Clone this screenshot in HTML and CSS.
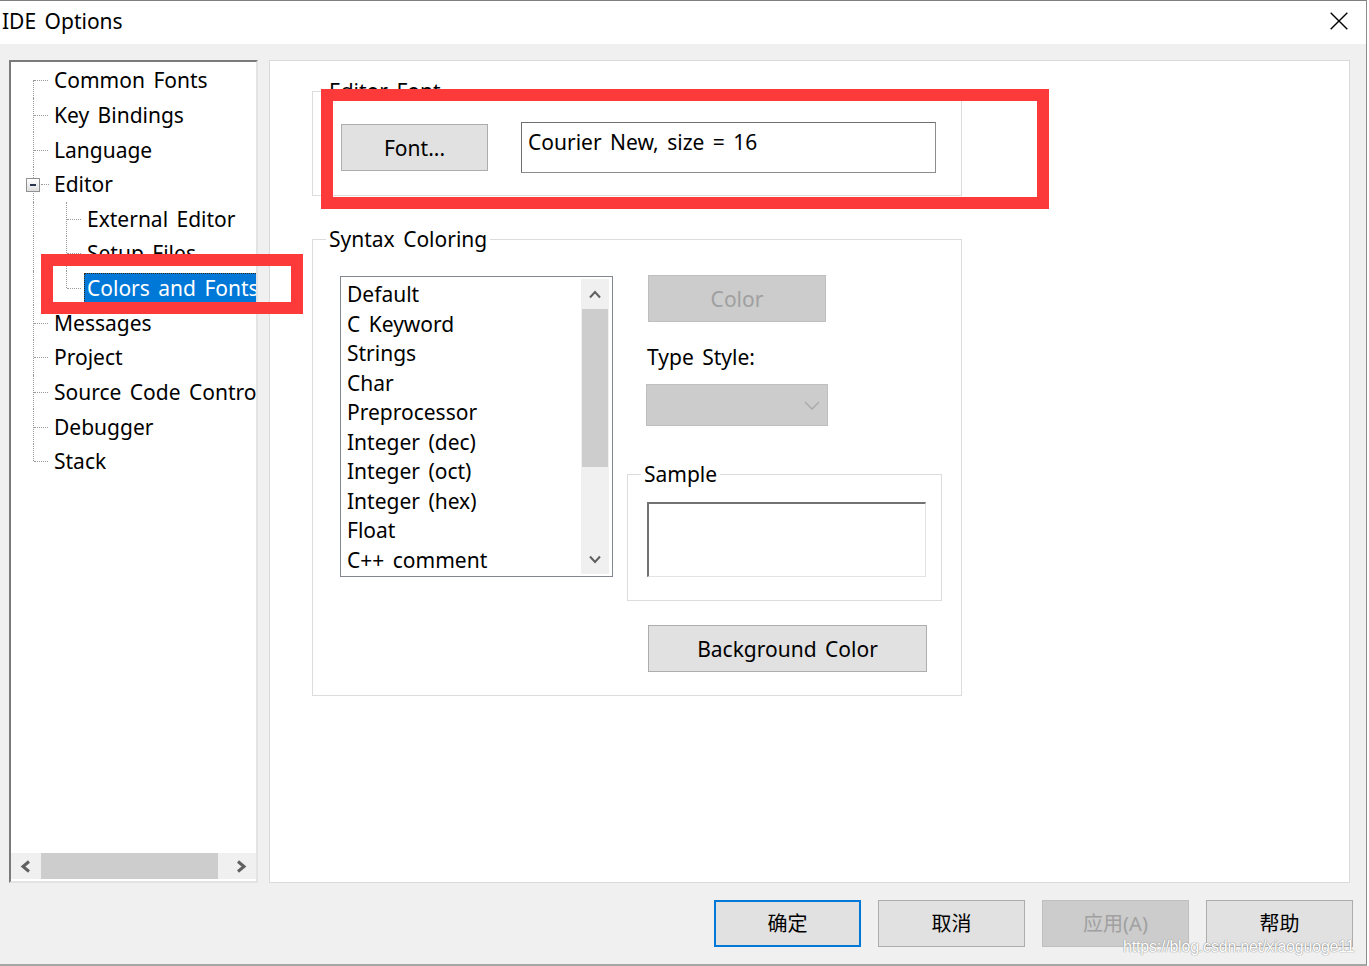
FILE: index.html
```html
<!DOCTYPE html>
<html lang="en">
<head>
<meta charset="utf-8">
<title>IDE Options</title>
<link rel="stylesheet" href="styles.css">
</head>
<body>
<div class="window">
  <header class="titlebar">
    <span class="title">IDE Options</span>
    <svg class="close" width="18" height="18" viewBox="0 0 18 18"><path d="M0.7 0.7 L17.3 17.3 M17.3 0.7 L0.7 17.3" stroke="#000" stroke-width="1.4" fill="none"/></svg>
  </header>

  <main class="content">
    <aside class="tree-panel">
      <div class="tree">
        <div class="node l1 first"><i class="v1"></i><i class="h1"></i><span class="label">Common Fonts</span></div>
        <div class="node l1"><i class="v1"></i><i class="h1"></i><span class="label">Key Bindings</span></div>
        <div class="node l1"><i class="v1"></i><i class="h1"></i><span class="label">Language</span></div>
        <div class="node l1 open"><i class="v1"></i><i class="h1 short"></i><i class="toggle"></i><span class="label">Editor</span></div>
        <div class="node l2"><i class="v1"></i><i class="v2"></i><i class="h2"></i><span class="label">External Editor</span></div>
        <div class="node l2"><i class="v1"></i><i class="v2"></i><i class="h2"></i><span class="label">Setup Files</span></div>
        <div class="node l2 lastchild"><i class="v1"></i><i class="v2"></i><i class="h2"></i><span class="label sel">Colors and Fonts</span></div>
        <div class="node l1"><i class="v1"></i><i class="h1"></i><span class="label">Messages</span></div>
        <div class="node l1"><i class="v1"></i><i class="h1"></i><span class="label">Project</span></div>
        <div class="node l1"><i class="v1"></i><i class="h1"></i><span class="label">Source Code Control</span></div>
        <div class="node l1"><i class="v1"></i><i class="h1"></i><span class="label">Debugger</span></div>
        <div class="node l1 last"><i class="v1"></i><i class="h1"></i><span class="label">Stack</span></div>
      </div>
      <div class="hscroll">
        <span class="sbtn"><svg width="12" height="13" viewBox="0 0 12 13"><path d="M9 1.5 L3 6.5 L9 11.5" stroke="#606060" stroke-width="3" fill="none"/></svg></span>
        <span class="htrack"><span class="hthumb"></span></span>
        <span class="sbtn"><svg width="12" height="13" viewBox="0 0 12 13"><path d="M3 1.5 L9 6.5 L3 11.5" stroke="#606060" stroke-width="3" fill="none"/></svg></span>
      </div>
    </aside>

    <section class="page">
      <div class="group editor-font">
        <span class="legend">Editor Font</span>
        <div class="font-row">
          <button class="btn font-btn" type="button">Font...</button>
          <div class="field">Courier New, size = 16</div>
        </div>
      </div>

      <div class="group syntax">
        <span class="legend">Syntax Coloring</span>
        <div class="syntax-row">
          <div class="listbox">
            <ul class="items">
              <li>Default</li>
              <li>C Keyword</li>
              <li>Strings</li>
              <li>Char</li>
              <li>Preprocessor</li>
              <li>Integer (dec)</li>
              <li>Integer (oct)</li>
              <li>Integer (hex)</li>
              <li>Float</li>
              <li>C++ comment</li>
            </ul>
            <div class="vscroll">
              <span class="vbtn"><svg width="14" height="9" viewBox="0 0 14 9"><path d="M2 7.5 L7 2 L12 7.5" stroke="#606060" stroke-width="2" fill="none"/></svg></span>
              <span class="vtrack"><span class="vthumb"></span></span>
              <span class="vbtn"><svg width="14" height="9" viewBox="0 0 14 9"><path d="M2 1.5 L7 7 L12 1.5" stroke="#606060" stroke-width="2" fill="none"/></svg></span>
            </div>
          </div>

          <div class="side">
            <button class="btn disabled color-btn" type="button">Color</button>
            <span class="type-label">Type Style:</span>
            <div class="combo"><svg width="16" height="9" viewBox="0 0 16 9"><path d="M1 1 L8 8 L15 1" stroke="#a9a9a9" stroke-width="1.3" fill="none"/></svg></div>
            <div class="group sample">
              <span class="legend">Sample</span>
              <div class="sample-box"></div>
            </div>
            <button class="btn bg-btn" type="button">Background Color</button>
          </div>
        </div>
      </div>
    </section>
  </main>

  <footer class="buttons">
    <button class="btn dlg default" type="button">确定</button>
    <button class="btn dlg" type="button">取消</button>
    <button class="btn dlg disabled" type="button">应用(A)</button>
    <button class="btn dlg" type="button">帮助</button>
  </footer>

  <div class="mark mark-tree"></div>
  <div class="mark mark-font"></div>
  <div class="watermark">https://blog.csdn.net/xiaoguoge11</div>
</div>
</body>
</html>
```

FILE: styles.css
```css
* { box-sizing: border-box; }

html, body {
  margin: 0;
  padding: 0;
  background: #ffffff;
}

body {
  font-family: "Noto Sans", "Noto Sans CJK SC", sans-serif;
  font-size: 21px;
  word-spacing: 3px;
  color: #000;
}

.window {
  position: relative;
  width: 1367px;
  height: 966px;
  background: #f0f0f0;
  border-top: 1px solid #7f7f7f;
  border-right: 1px solid #8c8c8c;
  border-bottom: 2px solid #a6a6a6;
  overflow: hidden;
}

/* ---------- title bar ---------- */
.titlebar {
  height: 43px;
  background: #fff;
  display: flex;
  align-items: center;
  justify-content: space-between;
  padding: 0 18px 3px 2px;
}

.title {
  font-size: 21px;
  line-height: 24px;
}

.close { display: block; }

/* ---------- main area ---------- */
.content {
  display: flex;
  gap: 11px;
  padding: 16px 16px 0 9px;
  height: 839px;
}

/* tree panel */
.tree-panel {
  width: 249px;
  height: 823px;
  background: #fff;
  border-top: 2px solid #7a7a7a;
  border-left: 2px solid #7a7a7a;
  border-right: 2px solid #e3e3e3;
  border-bottom: 2px solid #e3e3e3;
  display: flex;
  flex-direction: column;
  overflow: hidden;
}

.tree {
  flex: 1;
  padding-top: 1px;
  overflow: hidden;
}

.node {
  position: relative;
  height: 34.64px;
  display: flex;
  align-items: center;
  padding-left: 43px;
  white-space: nowrap;
}

.node.l2 { padding-left: 76px; }

.label { line-height: 28px; }

.v1, .v2, .h1, .h2 {
  position: absolute;
  display: block;
}

.v1 {
  left: 22px;
  top: 0;
  bottom: 0;
  border-left: 1px dotted #9a9a9a;
}
.first .v1 { top: 50%; }
.last .v1 { bottom: 50%; }

.h1 {
  left: 23px;
  width: 14px;
  top: 50%;
  border-top: 1px dotted #9a9a9a;
}
.h1.short { left: 30px; width: 8px; }

.v2 {
  left: 55px;
  top: 0;
  bottom: 0;
  border-left: 1px dotted #9a9a9a;
}
.lastchild .v2 { bottom: 50%; }

.h2 {
  left: 56px;
  width: 14px;
  top: 50%;
  border-top: 1px dotted #9a9a9a;
}

.toggle {
  position: absolute;
  left: 15px;
  top: 50%;
  margin-top: -6px;
  width: 14px;
  height: 14px;
  border: 1px solid #919191;
  background: linear-gradient(#ffffff, #dedede);
}
.toggle::after {
  content: "";
  position: absolute;
  left: 3px;
  right: 3px;
  top: 5px;
  height: 2px;
  background: #2a3550;
}

.label.sel {
  background: #0078d7;
  color: #fff;
  margin-left: -3px;
  padding: 0 2px;
  border: 1px dotted #3a2a10;
  line-height: 28px;
}

/* horizontal scrollbar */
.hscroll {
  height: 26px;
  margin-bottom: 2px;
  background: #f0f0f0;
  display: flex;
}
.sbtn {
  width: 30px;
  display: flex;
  align-items: center;
  justify-content: center;
}
.htrack {
  flex: 1;
  display: flex;
}
.hthumb {
  width: 177px;
  background: #cdcdcd;
}

/* right page */
.page {
  flex: 1;
  height: 823px;
  background: #fff;
  border: 1px solid #dadada;
  padding: 30px 0 0 42px;
}

.group {
  border: 1px solid #dcdcdc;
  width: 650px;
}

.legend {
  display: block;
  width: max-content;
  margin: -13px 0 0 13px;
  padding: 0 3px;
  background: #fff;
  line-height: 24px;
}

.editor-font { height: 105px; }

.font-row {
  margin-top: 19px;
  padding-left: 28px;
  display: flex;
  align-items: center;
}

.btn {
  font-family: "Noto Sans", "Noto Sans CJK SC", sans-serif;
  font-size: 21px;
  word-spacing: 3px;
  color: #000;
  background: #e1e1e1;
  border: 1px solid #adadad;
  padding: 0;
  margin: 0;
  line-height: 24px;
}
.btn.disabled {
  background: #cccccc;
  border-color: #bfbfbf;
  color: #a0a0a0;
}

.font-btn { width: 147px; height: 47px; }

.field {
  margin-left: 33px;
  width: 415px;
  height: 51px;
  border: 1px solid #8c8c8c;
  border-top-color: #6f6f6f;
  border-left-color: #6f6f6f;
  padding: 7px 6px;
  line-height: 24px;
  white-space: nowrap;
}

.syntax {
  margin-top: 43px;
  height: 457px;
}

.syntax-row {
  margin-top: 25px;
  padding-left: 27px;
  display: flex;
  align-items: flex-start;
}

.listbox {
  width: 273px;
  height: 301px;
  border: 1px solid #828790;
  display: flex;
}

.items {
  list-style: none;
  margin: 0;
  padding: 3px 0 0 6px;
  flex: 1;
}
.items li {
  height: 29.56px;
  line-height: 29.56px;
  white-space: nowrap;
}

.vscroll {
  width: 28px;
  margin: 2px 3px 2px 0;
  background: #f0f0f0;
  display: flex;
  flex-direction: column;
}
.vbtn {
  height: 30px;
  display: flex;
  align-items: center;
  justify-content: center;
}
.vtrack {
  flex: 1;
  padding: 0 1px;
}
.vthumb {
  display: block;
  height: 158px;
  background: #cdcdcd;
}

.side {
  margin-left: 14px;
  margin-top: -1px;
  width: 315px;
  display: flex;
  flex-direction: column;
  align-items: flex-start;
}

.color-btn {
  margin-left: 21px;
  width: 178px;
  height: 47px;
}

.type-label {
  margin: 23px 0 0 20px;
  line-height: 24px;
}

.combo {
  margin: 15px 0 0 19px;
  width: 182px;
  height: 42px;
  background: #cccccc;
  border: 1px solid #bfbfbf;
  display: flex;
  align-items: center;
  justify-content: flex-end;
  padding-right: 7px;
}
.combo svg { display: block; }

.sample {
  margin-top: 48px;
  width: 315px;
  height: 127px;
}

.sample-box {
  margin: 16px 0 0 19px;
  width: 279px;
  height: 75px;
  border-top: 2px solid #737373;
  border-left: 2px solid #737373;
  border-right: 1px solid #e3e3e3;
  border-bottom: 1px solid #e3e3e3;
  background: #fff;
}

.bg-btn {
  margin: 24px 0 0 21px;
  width: 279px;
  height: 47px;
}

/* dialog buttons */
.buttons {
  display: flex;
  justify-content: flex-end;
  gap: 17px;
  padding: 17px 13px 0 0;
}
.dlg {
  width: 147px;
  height: 47px;
  font-size: 20px;
}
.dlg.default {
  border: 2px solid #0078d7;
}

/* annotation overlays */
.mark {
  position: absolute;
  border: 12px solid #fc3a3a;
  pointer-events: none;
}
.mark-tree {
  left: 41px;
  top: 253px;
  width: 262px;
  height: 60px;
}
.mark-font {
  left: 321px;
  top: 88px;
  width: 728px;
  height: 120px;
}

.watermark {
  position: absolute;
  left: 1123px;
  top: 937px;
  font-family: "Liberation Sans", Arial, sans-serif;
  font-size: 16px;
  line-height: 18px;
  letter-spacing: -0.2px;
  word-spacing: 0;
  color: #ffffff;
  text-shadow: 0 0 1px #8a8a8a, 0 0 1px #8a8a8a;
  white-space: nowrap;
}
```
